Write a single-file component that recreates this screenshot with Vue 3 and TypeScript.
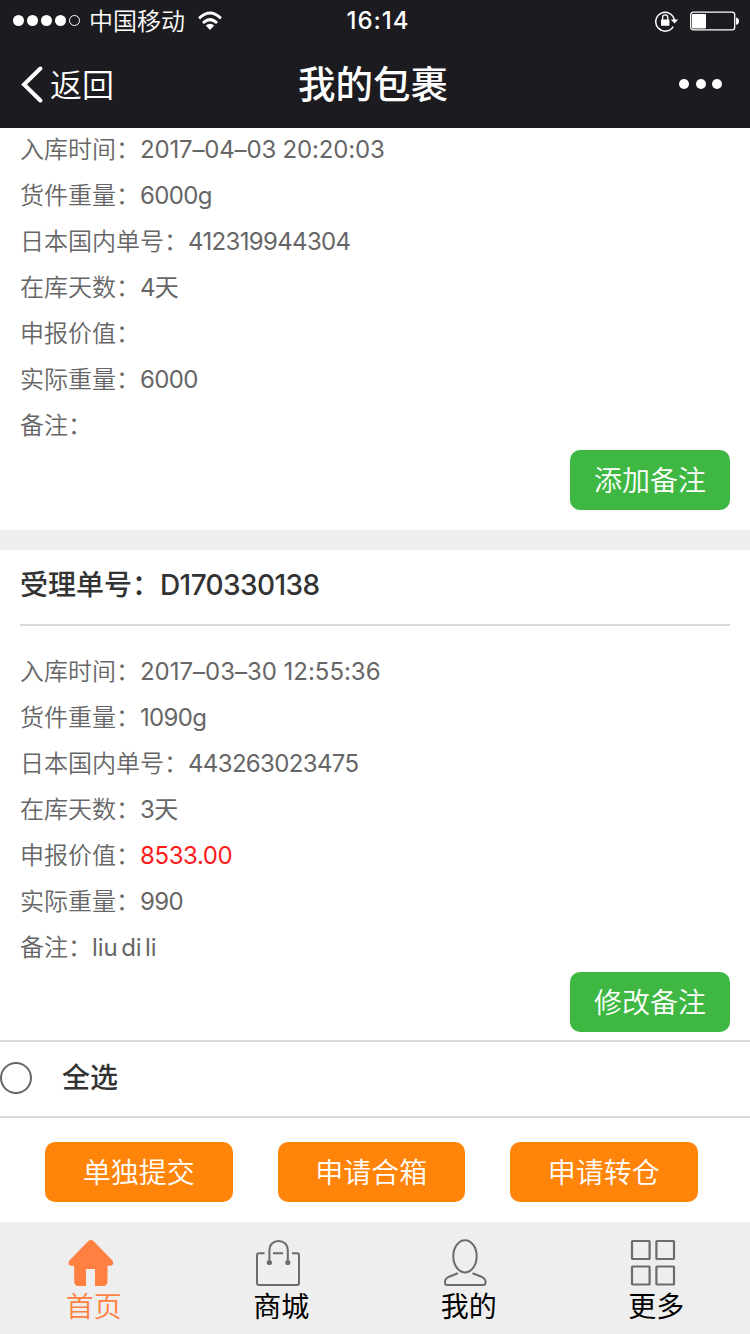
<script setup lang="ts">
interface Row {
  label: string
  value: string
  kind?: 'alert' | 'date' | 'words'
}

interface Parcel {
  id: string
  title?: string
  rows: Row[]
  action: string
}

const COLON = '\uFF1A'

const parcels: Parcel[] = [
  {
    id: 'first',
    action: '添加备注',
    rows: [
      { label: '入库时间', value: '2017–04–03 20:20:03', kind: 'date' },
      { label: '货件重量', value: '6000g' },
      { label: '日本国内单号', value: '412319944304' },
      { label: '在库天数', value: '4天' },
      { label: '申报价值', value: '' },
      { label: '实际重量', value: '6000' },
      { label: '备注', value: '' },
    ],
  },
  {
    id: 'second',
    title: 'D170330138',
    action: '修改备注',
    rows: [
      { label: '入库时间', value: '2017–03–30 12:55:36', kind: 'date' },
      { label: '货件重量', value: '1090g' },
      { label: '日本国内单号', value: '443263023475' },
      { label: '在库天数', value: '3天' },
      { label: '申报价值', value: '8533.00', kind: 'alert' },
      { label: '实际重量', value: '990' },
      { label: '备注', value: 'liu di li', kind: 'words' },
    ],
  },
]

const submits: string[] = ['单独提交', '申请合箱', '申请转仓']
</script>

<template>
  <div class="screen">
    <header class="top">
      <div class="status">
        <div class="carrier">
          <svg width="68" height="12" viewBox="0 0 68 12">
            <g fill="#fff">
              <circle cx="5.5" cy="5.5" r="5.5" />
              <circle cx="19.5" cy="5.5" r="5.5" />
              <circle cx="33.5" cy="5.5" r="5.5" />
              <circle cx="47.5" cy="5.5" r="5.5" />
            </g>
            <circle cx="61.5" cy="5.5" r="5" fill="none" stroke="#fff" stroke-width="1" />
          </svg>
          <span class="operator">中国移动</span>
          <svg class="wifi" width="24" height="20" viewBox="0 0 26 20" preserveAspectRatio="none">
            <g fill="none" stroke="#fff" stroke-width="3">
              <path d="M1.2 7.3Q13 -3.2 24.8 7.3" />
              <path d="M5.4 12Q13 5.2 20.6 12" />
            </g>
            <path d="M8.4 14.6Q13 10.8 17.6 14.6L13 19Z" fill="#fff" />
          </svg>
        </div>
        <span class="clock">16:14</span>
        <div class="indicators">
          <svg width="24" height="22" viewBox="0 0 24 22">
            <path d="M18.2 16.6A9.4 9.4 0 1 1 19.4 10" fill="none" stroke="#fff" stroke-width="1.5" />
            <path d="M15.8 9.6H23.2L19.5 13.6Z" fill="#fff" />
            <rect x="6" y="9.5" width="8.4" height="6.3" rx="0.6" fill="#fff" />
            <path d="M7.6 10V7.5a2.6 2.6 0 0 1 5.2 0V10" fill="none" stroke="#fff" stroke-width="1.3" />
          </svg>
          <svg width="50" height="20" viewBox="0 0 50 20">
            <rect x="0.7" y="1.2" width="44" height="17.6" rx="2.6" fill="none" stroke="#fff" stroke-width="1.3" />
            <rect x="2" y="3" width="14" height="14.4" rx="0.8" fill="#fff" />
            <path d="M46 6.6Q49 7 49 10.2T46 13.8Z" fill="#fff" />
          </svg>
        </div>
      </div>
      <div class="nav">
        <div class="back">
          <svg width="24" height="38" viewBox="0 0 24 38">
            <path d="M21.4 3.5L5 19.5L21.4 35.5" fill="none" stroke="#fff" stroke-width="4" stroke-linecap="round" />
          </svg>
          <span>返回</span>
        </div>
        <h1>我的包裹</h1>
        <div class="more"><i></i><i></i><i></i></div>
      </div>
    </header>

    <main>
      <section v-for="parcel in parcels" :key="parcel.id" class="parcel">
        <h2 v-if="parcel.title">
          <span>受理单号{{ COLON }}</span>
          <span class="title-id">{{ parcel.title }}</span>
        </h2>
        <dl>
          <div v-for="row in parcel.rows" :key="row.label" class="row">
            <dt>{{ row.label }}{{ COLON }}</dt>
            <dd :class="row.kind">{{ row.value }}</dd>
          </div>
        </dl>
        <button class="note">{{ parcel.action }}</button>
      </section>
    </main>

    <div class="select-all">
      <span class="radio"></span>
      <span>全选</span>
    </div>

    <div class="submits">
      <button v-for="name in submits" :key="name">{{ name }}</button>
    </div>

    <nav class="tabs">
      <a class="tab active">
        <svg width="46" height="48" viewBox="0 0 46 48">
          <path d="M20.6 1.8Q23 0.2 25.2 1.8L44.4 21.6Q46.6 26.2 42.5 26.8H39.5V43Q39 46.8 35.6 47H27V30H18V47H10Q6.8 46.8 6.2 43V26.8H3Q-1 26.2 1.4 21.6Z" fill="#ff8040" />
        </svg>
        <span>首页</span>
      </a>
      <a class="tab">
        <svg width="46" height="48" viewBox="0 0 46 48" fill="none" stroke="#6c6c6c" stroke-width="2">
          <path d="M9.5 14.3H4Q2 14.3 2 16.5V44Q2 46 4 46H42Q44 46 44 44V16.5Q44 14.3 42 14.3H37M18 14.3H28" />
          <path d="M14.4 23V11.5C14.4 -1.3 32.8 -1.3 32.8 11.5V23" />
          <circle cx="14.4" cy="23.5" r="1.6" fill="#6c6c6c" />
          <circle cx="32.8" cy="23.5" r="1.6" fill="#6c6c6c" />
        </svg>
        <span>商城</span>
      </a>
      <a class="tab">
        <svg width="46" height="48" viewBox="0 0 46 48" fill="none" stroke="#6c6c6c" stroke-width="2">
          <ellipse cx="22" cy="17.3" rx="11.7" ry="16.1" />
          <path d="M15 34.3L6 37.8Q2 39.5 2 42.5V44Q2 46 4 46H40Q42.5 46 42.5 44V42.5Q42.5 39.5 38.5 37.8L29.5 34.3" />
        </svg>
        <span>我的</span>
      </a>
      <a class="tab">
        <svg width="46" height="48" viewBox="0 0 46 48" fill="none" stroke="#6c6c6c" stroke-width="2.2">
          <rect x="2" y="2" width="17.6" height="18" rx="0.6" />
          <rect x="26.4" y="2" width="17.6" height="18" rx="0.6" />
          <rect x="2" y="27.5" width="17.6" height="18" rx="0.6" />
          <rect x="26.4" y="27.5" width="17.6" height="18" rx="0.6" />
        </svg>
        <span>更多</span>
      </a>
    </nav>
  </div>
</template>

<style>
body {
  margin: 0;
  background: #fff;
}
</style>

<style scoped>
* {
  box-sizing: border-box;
}

.screen {
  display: flex;
  flex-direction: column;
  width: 750px;
  height: 1334px;
  overflow: hidden;
  background: #fff;
  color: #666;
  font-family: Inter, 'Noto Sans CJK SC', sans-serif;
  font-weight: 350;
}

h1,
h2,
dl,
dd {
  margin: 0;
}

button {
  padding: 0 0 2px;
  border: 0;
  border-radius: 10px;
  color: #fff;
  font: 350 28px/58px 'Noto Sans CJK SC', sans-serif;
}

svg {
  display: block;
  flex: none;
}

.top {
  flex: none;
  height: 128px;
  background: #1c1b20;
  color: #fff;
}

.status,
.nav {
  display: grid;
  grid-template-columns: 1fr auto 1fr;
  align-items: center;
}

.status {
  height: 40px;
  padding: 0 10px 0 13px;
}

.carrier {
  display: flex;
  align-items: center;
}

.operator {
  margin-left: 8px;
  padding-bottom: 2px;
  font-family: 'Noto Sans CJK SC', sans-serif;
  font-size: 24px;
  line-height: 40px;
}

.wifi {
  margin-left: 13px;
}

.clock {
  padding: 0 0 0 3px;
  font-size: 24px;
  font-weight: 500;
  line-height: 40px;
  letter-spacing: 1px;
}

.indicators {
  display: flex;
  align-items: center;
  justify-content: flex-end;
  gap: 11px;
}

.nav {
  height: 88px;
  padding: 0 28px 0 19px;
}

.back {
  display: flex;
  align-items: center;
  gap: 7px;
  font-size: 32px;
  line-height: 60px;
}

.back span {
  padding-top: 3px;
}

h1 {
  padding: 0 0 4px 5px;
  font: 500 37.5px/60px 'Noto Sans CJK SC', sans-serif;
}

.more {
  display: flex;
  justify-content: flex-end;
  gap: 6.5px;
}

.more i {
  width: 10px;
  height: 10px;
  border-radius: 50%;
  background: #fff;
}

main {
  flex: none;
  height: 912px;
}

.parcel {
  display: flow-root;
  height: 402px;
  padding: 0 20px;
}

.parcel:first-child dl {
  margin-top: -1px;
}

.parcel + .parcel {
  height: 510px;
  border-top: 20px solid #eee;
}

h2 {
  display: flex;
  height: 76px;
  margin-bottom: 23px;
  border-bottom: 2px solid #d9d9d9;
  color: #333;
  font-size: 28px;
  font-weight: 500;
  line-height: 70px;
}

.title-id {
  letter-spacing: -0.6px;
}

.row {
  display: flex;
  height: 46px;
  font-size: 24px;
  line-height: 46px;
  white-space: pre;
}

dd {
  font-weight: 400;
  letter-spacing: -0.65px;
}

.date {
  letter-spacing: -0.17px;
}

.parcel + .parcel .date {
  letter-spacing: -0.02px;
}

.words {
  letter-spacing: -0.1px;
  word-spacing: -3px;
}

.alert {
  letter-spacing: -0.4px;
  color: #ff1a1a;
}

.note {
  display: block;
  width: 160px;
  height: 60px;
  margin: 1px 0 0 auto;
  background: #3eb843;
}

.select-all {
  display: flex;
  flex: none;
  align-items: center;
  height: 78px;
  padding-bottom: 2px;
  border: solid #d9d9d9;
  border-width: 2px 0;
  color: #333;
  font-size: 28px;
  font-weight: 500;
  gap: 30px;
  line-height: 68px;
}

.radio {
  width: 32px;
  height: 32px;
  border: 2px solid #666;
  border-radius: 50%;
}

.submits {
  display: grid;
  flex: none;
  grid-template-columns: repeat(3, 187.5px);
  gap: 45px;
  height: 104px;
  padding: 24px 0 0 45px;
}

.submits button {
  height: 60px;
  background: #ff840a;
}

.tabs {
  display: grid;
  flex: none;
  grid-template-columns: repeat(4, 1fr);
  height: 112px;
  background: #eee;
}

.tab {
  display: flex;
  flex-direction: column;
  align-items: center;
  padding-top: 17px;
  color: #000;
  font-size: 28px;
  font-weight: 400;
  line-height: 40px;
}

.tab svg {
  margin-left: -5px;
}

.tab:nth-child(even) svg {
  margin-left: -7px;
}

.tab.active {
  color: #ff8040;
  font-weight: 350;
}
</style>
